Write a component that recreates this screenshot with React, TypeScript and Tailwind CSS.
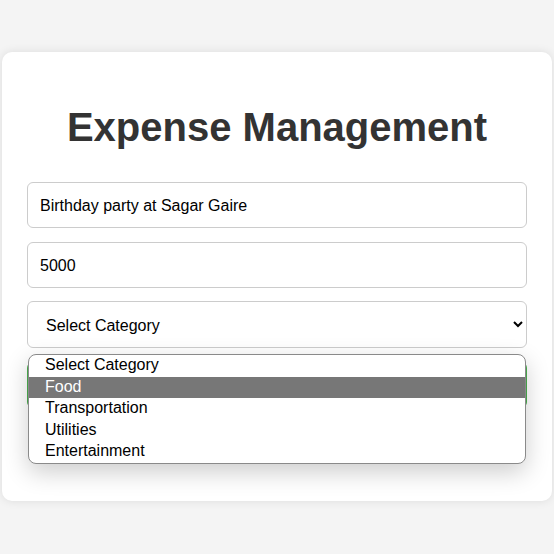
import React from "react";

export default function App() {
  const font = { fontFamily: '"Liberation Sans", Arial, sans-serif' };
  return (
    <div className="min-h-[554px] w-[554px] bg-[#f4f4f4] pt-[52px]" style={font}>
      <div className="mx-auto w-[550px] h-[449px] rounded-[10px] bg-white shadow-[0_0_10px_rgba(0,0,0,0.1)] px-[25px] pt-[52px]">
        <h1 className="text-center text-[40px] font-bold leading-[46px] text-[#333] m-0">
          Expense Management
        </h1>
        <div className="mt-[32px] flex flex-col">
          <input
            className="h-[46px] w-full rounded-[6px] border border-[#ccc] px-[12px] pt-[2px] text-[16px] text-black outline-none"
            defaultValue="Birthday party at Sagar Gaire"
            style={font}
          />
          <input
            className="mt-[14px] h-[46px] w-full rounded-[6px] border border-[#ccc] px-[12px] pt-[2px] text-[16px] text-black outline-none"
            defaultValue="5000"
            style={font}
          />
          <div className="relative mt-[13px]">
            <select
              className="h-[47px] w-full rounded-[6px] border border-[#ccc] bg-white px-[14px] pt-[2px] text-[16px] text-black outline-none"
              style={font}
              defaultValue=""
            >
              <option value="">Select Category</option>
              <option>Food</option>
              <option>Transportation</option>
              <option>Utilities</option>
              <option>Entertainment</option>
            </select>
          </div>
          <div className="relative mt-[14px]">
            <button className="h-[46px] w-full rounded-[6px] bg-[#4caf50] text-[16px] text-white" style={font}>
              Add Expense
            </button>
            <div className="absolute left-[1px] right-[1px] top-[-8px] z-10 overflow-hidden rounded-[8px] border border-[#8a8a8a] bg-white text-[16px] text-black shadow-[0_8px_24px_rgba(0,0,0,0.2)]">
              <div className="h-[21.6px] pl-[16px] leading-[20.6px]">Select Category</div>
              <div className="h-[21.6px] bg-[#777777] pl-[16px] leading-[20.6px] text-white">Food</div>
              <div className="h-[21.6px] pl-[16px] leading-[20.6px]">Transportation</div>
              <div className="h-[21.6px] pl-[16px] leading-[20.6px]">Utilities</div>
              <div className="h-[21.6px] pl-[16px] leading-[20.6px]">Entertainment</div>
            </div>
          </div>
        </div>
      </div>
    </div>
  );
}
